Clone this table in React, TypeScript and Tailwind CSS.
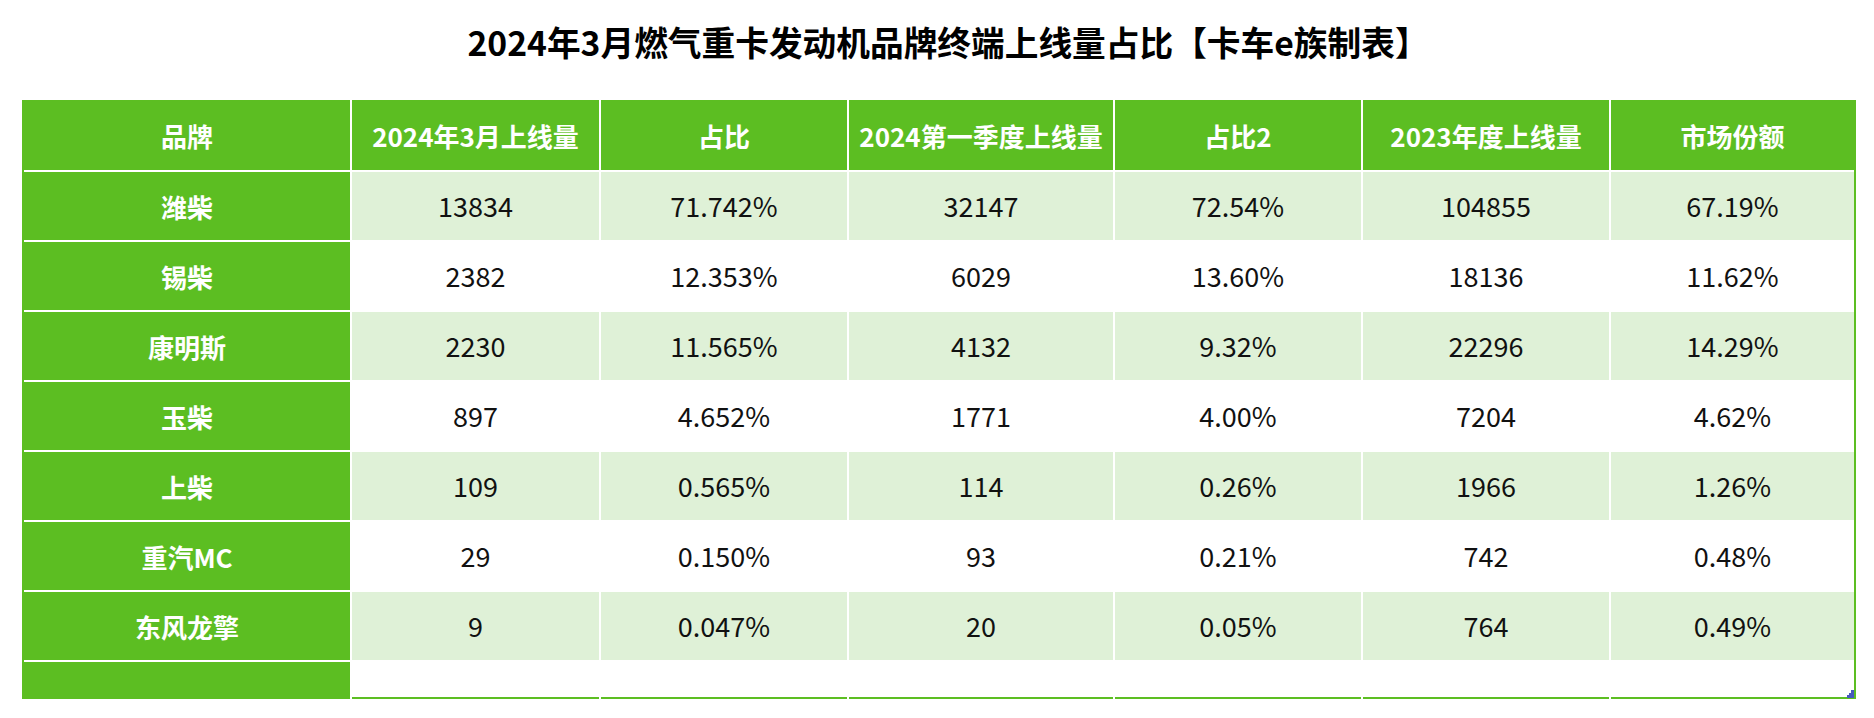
import React from "react";

type Row = {
  brand: string;
  march: string;
  share: string;
  q1: string;
  share2: string;
  year2023: string;
  market: string;
};

const headers = [
  "品牌",
  "2024年3月上线量",
  "占比",
  "2024第一季度上线量",
  "占比2",
  "2023年度上线量",
  "市场份额",
];

const rows: Row[] = [
  { brand: "潍柴", march: "13834", share: "71.742%", q1: "32147", share2: "72.54%", year2023: "104855", market: "67.19%" },
  { brand: "锡柴", march: "2382", share: "12.353%", q1: "6029", share2: "13.60%", year2023: "18136", market: "11.62%" },
  { brand: "康明斯", march: "2230", share: "11.565%", q1: "4132", share2: "9.32%", year2023: "22296", market: "14.29%" },
  { brand: "玉柴", march: "897", share: "4.652%", q1: "1771", share2: "4.00%", year2023: "7204", market: "4.62%" },
  { brand: "上柴", march: "109", share: "0.565%", q1: "114", share2: "0.26%", year2023: "1966", market: "1.26%" },
  { brand: "重汽MC", march: "29", share: "0.150%", q1: "93", share2: "0.21%", year2023: "742", market: "0.48%" },
  { brand: "东风龙擎", march: "9", share: "0.047%", q1: "20", share2: "0.05%", year2023: "764", market: "0.49%" },
];

export default function App() {
  return (
    <div className="w-[1874px] h-[718px] bg-white font-['Noto_Sans_CJK_SC','Noto_Sans',sans-serif]">
      {/* Title */}
      <div className="h-[84px] pl-[22px] flex items-center justify-center">
        <h1 className="text-[33.7px] font-bold text-black leading-none">
          2024年3月燃气重卡发动机品牌终端上线量占比【卡车e族制表】
        </h1>
      </div>

      {/* Table */}
      <div className="relative mt-[16px] ml-[22px] w-[1834px] border-x-2 border-[#5cbe22]">
        <div className="grid grid-cols-[326px_247px_246px_264px_246px_246px_243px] gap-[2px] bg-white">
          {headers.map((h) => (
            <div
              key={h}
              className="h-[70px] flex items-center justify-center bg-[#5cbe22] text-white text-[26px] font-bold"
            >
              {h}
            </div>
          ))}

          {rows.map((r, i) => {
            const cellBg = i % 2 === 0 ? "bg-[#dff1d7]" : "bg-white";
            const values = [r.march, r.share, r.q1, r.share2, r.year2023, r.market];
            return (
              <React.Fragment key={r.brand}>
                <div className="h-[68px] flex items-center justify-center bg-[#5cbe22] text-white text-[26px] font-bold">
                  {r.brand}
                </div>
                {values.map((v, j) => (
                  <div
                    key={j}
                    className={`h-[68px] flex items-center justify-center ${cellBg} text-[#111] text-[27px]`}
                  >
                    {v}
                  </div>
                ))}
              </React.Fragment>
            );
          })}

          {/* empty last row */}
          <div className="h-[37px] bg-[#5cbe22]" />
          {[0, 1, 2, 3, 4, 5].map((k) => (
            <div key={k} className="h-[37px] bg-white border-b-2 border-[#5cbe22]" />
          ))}
        </div>

        {/* resize handle */}
        <svg
          className="absolute right-0 bottom-[1px]"
          width="7"
          height="8"
          viewBox="0 0 7 8"
        >
          <path d="M4 0h3v8H0V5h2V3h2z" fill="#4759bd" />
        </svg>
      </div>
    </div>
  );
}
